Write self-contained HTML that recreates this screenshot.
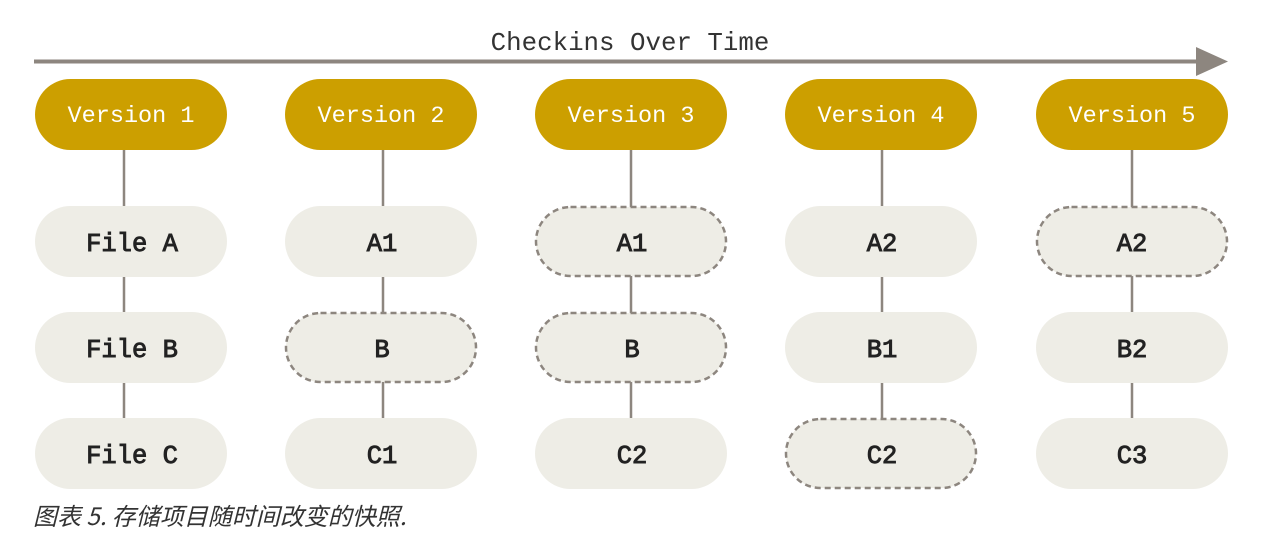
<!DOCTYPE html>
<html><head><meta charset="utf-8"><style>
html,body{margin:0;padding:0;background:#fff;width:1273px;height:548px;overflow:hidden}
svg{display:block}
</style></head><body>
<svg width="1273" height="548" viewBox="0 0 1273 548" xmlns="http://www.w3.org/2000/svg">
<line x1="34" y1="61.5" x2="1200" y2="61.5" stroke="#8d867f" stroke-width="4"/>
<polygon points="1196,47 1228,61.5 1196,76" fill="#8d867f"/>
<text x="630" y="50" text-anchor="middle" font-family="Liberation Mono, monospace" font-size="25.8" fill="#333">Checkins Over Time</text>
<g stroke="#8d867f" stroke-width="2.5">
<line x1="124" y1="150" x2="124" y2="418"/>
<line x1="383" y1="150" x2="383" y2="418"/>
<line x1="631" y1="150" x2="631" y2="418"/>
<line x1="882" y1="150" x2="882" y2="418"/>
<line x1="1132" y1="150" x2="1132" y2="418"/>
</g>
<g fill="#cc9f00">
<rect x="35" y="79" width="192" height="71" rx="35.5"/>
<rect x="285" y="79" width="192" height="71" rx="35.5"/>
<rect x="535" y="79" width="192" height="71" rx="35.5"/>
<rect x="785" y="79" width="192" height="71" rx="35.5"/>
<rect x="1036" y="79" width="192" height="71" rx="35.5"/>
</g>
<g font-family="Liberation Mono, monospace" font-size="23.5" fill="#fff" text-anchor="middle">
<text x="131" y="122">Version 1</text>
<text x="381" y="122">Version 2</text>
<text x="631" y="122">Version 3</text>
<text x="881" y="122">Version 4</text>
<text x="1132" y="122">Version 5</text>
</g>
<g fill="#eeede6">
<rect x="35" y="206" width="192" height="71" rx="35.5"/>
<rect x="35" y="312" width="192" height="71" rx="35.5"/>
<rect x="35" y="418" width="192" height="71" rx="35.5"/>
<rect x="285" y="206" width="192" height="71" rx="35.5"/>
<rect x="285" y="418" width="192" height="71" rx="35.5"/>
<rect x="535" y="418" width="192" height="71" rx="35.5"/>
<rect x="785" y="206" width="192" height="71" rx="35.5"/>
<rect x="785" y="312" width="192" height="71" rx="35.5"/>
<rect x="1036" y="312" width="192" height="71" rx="35.5"/>
<rect x="1036" y="418" width="192" height="71" rx="35.5"/>
</g>
<g fill="#eeede6" stroke="#8d867f" stroke-width="2.5" stroke-dasharray="6,4">
<rect x="286" y="313" width="190" height="69" rx="34.5"/>
<rect x="536" y="207" width="190" height="69" rx="34.5"/>
<rect x="536" y="313" width="190" height="69" rx="34.5"/>
<rect x="786" y="419" width="190" height="69" rx="34.5"/>
<rect x="1037" y="207" width="190" height="69" rx="34.5"/>
</g>
<g font-family="Liberation Mono, monospace" font-size="25.5" fill="#222" stroke="#222" stroke-width="0.9" text-anchor="middle">
<text x="132" y="251">File A</text>
<text x="132" y="357">File B</text>
<text x="132" y="463">File C</text>
<text x="382" y="251">A1</text>
<text x="382" y="357">B</text>
<text x="382" y="463">C1</text>
<text x="632" y="251">A1</text>
<text x="632" y="357">B</text>
<text x="632" y="463">C2</text>
<text x="882" y="251">A2</text>
<text x="882" y="357">B1</text>
<text x="882" y="463">C2</text>
<text x="1132" y="251">A2</text>
<text x="1132" y="357">B2</text>
<text x="1132" y="463">C3</text>
</g>
<text x="33" y="525" font-family="Noto Sans CJK SC, sans-serif" font-size="24" font-style="italic" fill="#333">图表 5. 存储项目随时间改变的快照.</text>
</svg>
</body></html>
